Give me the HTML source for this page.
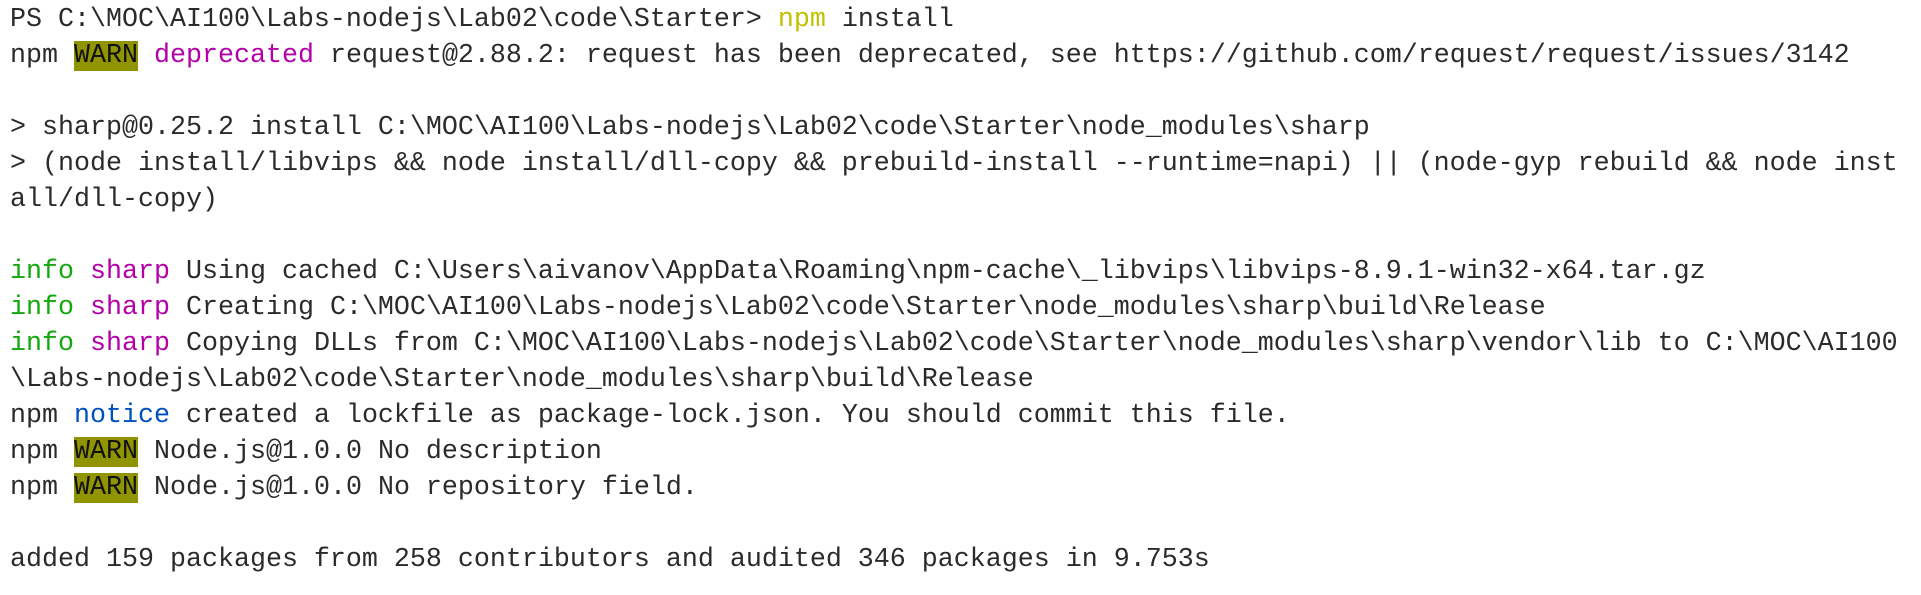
<!DOCTYPE html>
<html><head><meta charset="utf-8"><style>
html,body{margin:0;padding:0;background:#fff;width:1921px;height:595px;overflow:hidden}
pre{margin:0;padding:2px 0 0 10px;font-family:"Liberation Mono",monospace;font-size:26.67px;line-height:36px;color:#2b2b2b;white-space:pre}
.y{color:#c1c100}.w{background:#8f9400;color:#111}.m{color:#b400a8}.g{color:#13a80e}.b{color:#0050c0}
</style></head><body><pre>PS C:\MOC\AI100\Labs-nodejs\Lab02\code\Starter&gt; <span class="y">npm</span> install
npm <span class="w">WARN</span> <span class="m">deprecated</span> request@2.88.2: request has been deprecated, see https://github.com/request/request/issues/3142

&gt; sharp@0.25.2 install C:\MOC\AI100\Labs-nodejs\Lab02\code\Starter\node_modules\sharp
&gt; (node install/libvips &amp;&amp; node install/dll-copy &amp;&amp; prebuild-install --runtime=napi) || (node-gyp rebuild &amp;&amp; node inst
all/dll-copy)

<span class="g">info</span> <span class="m">sharp</span> Using cached C:\Users\aivanov\AppData\Roaming\npm-cache\_libvips\libvips-8.9.1-win32-x64.tar.gz
<span class="g">info</span> <span class="m">sharp</span> Creating C:\MOC\AI100\Labs-nodejs\Lab02\code\Starter\node_modules\sharp\build\Release
<span class="g">info</span> <span class="m">sharp</span> Copying DLLs from C:\MOC\AI100\Labs-nodejs\Lab02\code\Starter\node_modules\sharp\vendor\lib to C:\MOC\AI100
\Labs-nodejs\Lab02\code\Starter\node_modules\sharp\build\Release
npm <span class="b">notice</span> created a lockfile as package-lock.json. You should commit this file.
npm <span class="w">WARN</span> Node.js@1.0.0 No description
npm <span class="w">WARN</span> Node.js@1.0.0 No repository field.

added 159 packages from 258 contributors and audited 346 packages in 9.753s</pre></body></html>
